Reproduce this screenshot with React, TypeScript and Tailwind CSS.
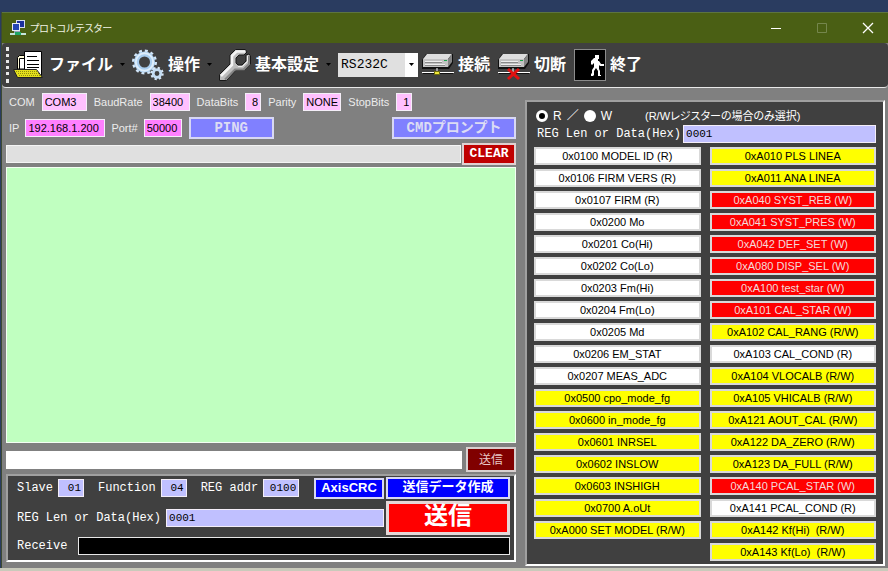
import type { ReactNode } from "react";
import clsx from "clsx";

type Tone = "read" | "both" | "write";

type Register = {
  label: string;
  tone: Tone;
};

const leftRegisters: Register[] = [
  { label: "0x0100 MODEL ID (R)", tone: "read" },
  { label: "0x0106 FIRM VERS (R)", tone: "read" },
  { label: "0x0107 FIRM (R)", tone: "read" },
  { label: "0x0200 Mo", tone: "read" },
  { label: "0x0201 Co(Hi)", tone: "read" },
  { label: "0x0202 Co(Lo)", tone: "read" },
  { label: "0x0203 Fm(Hi)", tone: "read" },
  { label: "0x0204 Fm(Lo)", tone: "read" },
  { label: "0x0205 Md", tone: "read" },
  { label: "0x0206 EM_STAT", tone: "read" },
  { label: "0x0207 MEAS_ADC", tone: "read" },
  { label: "0x0500 cpo_mode_fg", tone: "both" },
  { label: "0x0600 in_mode_fg", tone: "both" },
  { label: "0x0601 INRSEL", tone: "both" },
  { label: "0x0602 INSLOW", tone: "both" },
  { label: "0x0603 INSHIGH", tone: "both" },
  { label: "0x0700 A.oUt", tone: "both" },
  { label: "0xA000 SET MODEL (R/W)", tone: "both" },
];

const rightRegisters: Register[] = [
  { label: "0xA010 PLS LINEA", tone: "both" },
  { label: "0xA011 ANA LINEA", tone: "both" },
  { label: "0xA040 SYST_REB (W)", tone: "write" },
  { label: "0xA041 SYST_PRES (W)", tone: "write" },
  { label: "0xA042 DEF_SET (W)", tone: "write" },
  { label: "0xA080 DISP_SEL (W)", tone: "write" },
  { label: "0xA100 test_star (W)", tone: "write" },
  { label: "0xA101 CAL_STAR (W)", tone: "write" },
  { label: "0xA102 CAL_RANG (R/W)", tone: "both" },
  { label: "0xA103 CAL_COND (R)", tone: "read" },
  { label: "0xA104 VLOCALB (R/W)", tone: "both" },
  { label: "0xA105 VHICALB (R/W)", tone: "both" },
  { label: "0xA121 AOUT_CAL (R/W)", tone: "both" },
  { label: "0xA122 DA_ZERO (R/W)", tone: "both" },
  { label: "0xA123 DA_FULL (R/W)", tone: "both" },
  { label: "0xA140 PCAL_STAR (W)", tone: "write" },
  { label: "0xA141 PCAL_COND (R)", tone: "read" },
  { label: "0xA142 Kf(Hi)  (R/W)", tone: "both" },
  { label: "0xA143 Kf(Lo)  (R/W)", tone: "both" },
];

const toneClass: Record<Tone, string> = {
  read: "bg-white text-black",
  both: "bg-[#ffff00] text-black",
  write: "bg-[#ff0000] text-[#f4dada]",
};

const mono = "font-['Liberation_Mono','Noto_Sans_CJK_JP',monospace]";

function AppIcon() {
  return (
    <svg className="size-4 shrink-0" viewBox="0 0 16 16" aria-hidden="true">
      <path d="M6 0h9v8H6z" fill="#d5dcee" />
      <path d="M7 1h7v6H7z" fill="#1b2f9c" />
      <path d="M2 3h8v8H2z" fill="#e6ebf7" />
      <path d="M3 4h6v6H3z" fill="#2344b4" />
      <path d="M4 11h6v2H4z" fill="#9aa4bb" />
      <path d="M0 13h16v2H0z" fill="#c6e4dc" />
      <path d="M5 12h6v3H5z" fill="#1fa565" />
    </svg>
  );
}

function FolderIcon() {
  return (
    <svg className="h-8 w-8 shrink-0" viewBox="0 0 32 32" aria-hidden="true">
      <path d="M4.500 20V8.500l2-2h5V20z" fill="#fffbd8" stroke="#000" />
      <path d="M6.500 20V9.500h5V20z" fill="#fff" stroke="#000" />
      <path d="M11.500 2.500h17v24h-17z" fill="#fff" stroke="#000" />
      <path d="M14 7.500h10M14 11.500h12M14 15.500h12M14 18.500h12" stroke="#000" />
      <path d="M.5 20.500h23l6 8h-25z" fill="#e3e01c" stroke="#222" />
      <path d="M3 22.500h21M5 24.500h21M6 26.500h21" stroke="#8f8c10" strokeDasharray="1 1" />
    </svg>
  );
}

function GearsIcon() {
  return (
    <svg className="h-8 w-8 shrink-0" viewBox="0 0 32 32" fill="none" aria-hidden="true">
      <circle cx="12.500" cy="13" r="11" stroke="#d3e6f8" strokeWidth="3" strokeDasharray="2.880 2.880" />
      <circle cx="12.500" cy="13" r="8" stroke="#a9cdee" strokeWidth="5" />
      <circle cx="12.500" cy="13" r="8.700" stroke="#deedfa" strokeWidth="2" />
      <circle cx="25" cy="24.500" r="5.500" stroke="#d8e8f8" strokeWidth="2.400" strokeDasharray="2.160 2.160" />
      <circle cx="25" cy="24.500" r="3.800" stroke="#c4dcf2" strokeWidth="2.800" />
    </svg>
  );
}

function WrenchIcon() {
  return (
    <svg className="h-8 w-8 shrink-0" viewBox="0 0 32 32" aria-hidden="true">
      <path
        d="M.5 25.500L11 15V6L16.500.5h10L28 3l-3 3h-5l-3 3v5l2 2h4l4-4V6l3-1 1.500 2v8L25 21.500h-8.500L7.500 31.500h-7z"
        fill="#bdbdbd"
        stroke="#181818"
      />
      <path d="M2 27L13 16V7l4.500-4.500H26" fill="none" stroke="#f4f4f4" strokeWidth="2.500" />
      <path d="M6 30.500L16 20.500h8.500L30 15V7" fill="none" stroke="#858585" strokeWidth="2" />
      <path d="M19 17.500h4.500l5-5V7" fill="none" stroke="#eee" />
    </svg>
  );
}

function DriveIcon({ broken = false }: { broken?: boolean }) {
  return (
    <svg className="h-8 w-8 shrink-0" viewBox="0 0 32 32" aria-hidden="true">
      <path d="M0 11l4-6h27v9l-4 6H0z" fill="#111" />
      <path d="M1 10l4-5h25l-4 5z" fill="#dedede" />
      <path d="M1 10h25v8H1z" fill="#c2c2c2" />
      <path d="M26 10l4-5v8l-4 5z" fill="#858585" />
      <path d="M3 12.500h17M3 15.500h20" stroke="#eee" />
      <path d="M3 13.500h17M3 16.500h20" stroke="#8a8a8a" />
      <path d="M22 11h3v1h-3z" fill="#17a34a" />
      <path d="M15 19v5M0 23.500h13M18 23.500h14" stroke="#fff" />
      <path d="M1 24.500h12M18 24.500h13" stroke="#111" />
      {broken ? (
        <path d="M10 20l11 10M21 20l-11 10" stroke="#e01010" strokeWidth="3" />
      ) : (
        <path d="M12.500 22.500h5v3h-5z" fill="#f0e838" stroke="#6d6a10" />
      )}
    </svg>
  );
}

function ExitIcon() {
  return (
    <svg className="h-8 w-8 shrink-0 border border-[#8c8c8c] bg-black" viewBox="0 0 30 30" aria-hidden="true">
      <path
        d="M20 5h4v4h-1v2h1l2 3h3v2h-4l-1-1v4l1 2v4h1v1h-3v-5l-2-3-2 3v4l-1 1h-2v-2l1-1v-3l2-3v-4l-2 2-1-1v-3l3-3h2V9h-1z"
        fill="#fff"
      />
    </svg>
  );
}

function Caret() {
  return (
    <svg className="mx-[7px] h-1 w-[5px] shrink-0" viewBox="0 0 5 4" aria-hidden="true">
      <path d="M0 0h5L2.500 3z" fill="#000" />
    </svg>
  );
}

function ToolButton({ icon, children }: { icon: ReactNode; children: ReactNode }) {
  return (
    <button type="button" className="flex shrink-0 items-center gap-1 text-base font-bold whitespace-nowrap text-white">
      {icon}
      {children}
    </button>
  );
}

type FieldProps = {
  id: string;
  label: string;
  value: string;
  className: string;
  labelClass?: string;
};

function Field({ id, label, value, className, labelClass }: FieldProps) {
  return (
    <>
      <label htmlFor={id} className={clsx("shrink-0 whitespace-nowrap", labelClass)}>
        {label}
      </label>
      <input
        id={id}
        defaultValue={value}
        className={clsx("h-[18px] min-w-0 border border-[#f4eef8] px-[2px] text-black", className)}
      />
    </>
  );
}

function RegisterColumn({ items }: { items: Register[] }) {
  return (
    <div className="flex flex-col gap-1">
      {items.map((item) => (
        <button
          key={item.label}
          type="button"
          className={clsx(
            "flex h-[18px] items-center justify-center border-2 border-[#d9d9d9] text-[11px] leading-3 whitespace-pre",
            toneClass[item.tone],
          )}
        >
          {item.label}
        </button>
      ))}
    </div>
  );
}

function TitleBar() {
  return (
    <header className="flex h-[31px] items-center border-t border-[#5d7440] bg-[#4a5f14] pr-[14px] pl-2 text-[#f0f2e4]">
      <AppIcon />
      <h1 className="ml-1 text-[10px] [font-feature-settings:'palt']">プロトコルテスター</h1>
      <div className="ml-auto flex gap-[34px]">
        <button type="button" aria-label="最小化">
          <svg className="size-3" viewBox="0 0 12 12">
            <path d="M1 6.500h10" stroke="#fff" />
          </svg>
        </button>
        <button type="button" aria-label="最大化" disabled>
          <svg className="size-3" viewBox="0 0 12 12" fill="none">
            <path d="M1.500 1.500h9v9h-9z" stroke="#75864d" />
          </svg>
        </button>
        <button type="button" aria-label="閉じる">
          <svg className="size-3" viewBox="0 0 12 12">
            <path d="M1 1l10 10M11 1L1 11" stroke="#fff" strokeWidth="1.300" />
          </svg>
        </button>
      </div>
    </header>
  );
}

function Toolbar() {
  return (
    <nav className="flex h-[45px] items-center rounded-sm border-b border-[#e8e8e8] bg-[#404040] pl-1">
      <span className="mr-1 h-9 w-0 shrink-0 border-l-3 border-dotted border-[#e8e8e8]" />
      <ToolButton icon={<FolderIcon />}>ファイル</ToolButton>
      <Caret />
      <ToolButton icon={<GearsIcon />}>操作</ToolButton>
      <Caret />
      <ToolButton icon={<WrenchIcon />}>基本設定</ToolButton>
      <Caret />
      <div className="mr-1 grid w-20 shrink-0 items-center">
        <select
          aria-label="通信方式"
          className={clsx(
            "col-start-1 row-start-1 h-6 w-full appearance-none border-r-13 border-white bg-[#e0e0e0] pl-[3px] text-[13px] text-black",
            mono,
          )}
        >
          <option>RS232C</option>
        </select>
        <svg className="pointer-events-none col-start-1 row-start-1 mr-1 h-1 w-[5px] justify-self-end" viewBox="0 0 5 4">
          <path d="M0 0h5L2.500 3z" fill="#000" />
        </svg>
      </div>
      <div className="flex gap-2">
        <ToolButton icon={<DriveIcon />}>接続</ToolButton>
        <ToolButton icon={<DriveIcon broken />}>切断</ToolButton>
        <ToolButton icon={<ExitIcon />}>終了</ToolButton>
      </div>
    </nav>
  );
}

function ConnectionSettings() {
  return (
    <>
      <div className="flex items-center gap-[7px] pl-[3px]">
        <Field id="com" label="COM" value="COM3" className="w-[45px] bg-[#ffc0ff]" />
        <Field id="baud" label="BaudRate" value="38400" className="w-10 bg-[#ffc0ff]" />
        <Field id="data-bits" label="DataBits" value="8" className="w-4 bg-[#ffc0ff] text-right" />
        <Field id="parity" label="Parity" value="NONE" className="w-[38px] bg-[#ffc0ff]" />
        <Field id="stop-bits" label="StopBits" value="1" className="w-4 bg-[#ffc0ff] text-right" />
      </div>
      <div className="mt-[6px] flex items-center gap-[6px] pl-[3px]">
        <Field id="ip" label="IP" value="192.168.1.200" className="w-20 bg-[#ff80ff]" />
        <Field id="port" label="Port#" value="50000" className="w-[38px] bg-[#ff80ff]" />
        <button
          type="button"
          className={clsx("ml-px h-[22px] w-[85px] border-2 border-[#d8d8f4] bg-[#8080ff] text-sm leading-4 font-bold text-[#dcdcf4]", mono)}
        >
          PING
        </button>
        <button
          type="button"
          className={clsx("ml-auto h-[22px] w-[124px] border-2 border-[#d8d8f4] bg-[#8080ff] text-sm leading-4 font-bold text-[#dcdcf4]", mono)}
        >
          CMDプロンプト
        </button>
      </div>
    </>
  );
}

function MessagePanel() {
  return (
    <section
      className={clsx(
        "mt-[2px] flex flex-col gap-[2px] border-2 border-t-[#a0a0a0] border-r-white border-b-white border-l-[#a0a0a0] bg-[#404040] px-1 pt-px pb-[5px] text-xs text-white",
        mono,
      )}
    >
      <div className="grid grid-cols-[1fr_124px] gap-[2px]">
        <div className="flex items-center gap-[5px] pl-[5px]">
          <Field id="slave" label="Slave" value="01" className="w-[26px] bg-[#c0c0ff] text-right text-[11px]" />
          <Field id="function" label="Function" value="04" labelClass="ml-[9px]" className="w-[26px] bg-[#c0c0ff] text-right text-[11px]" />
          <Field id="reg-addr" label="REG addr" value="0100" labelClass="ml-[9px]" className="w-9 bg-[#c0c0ff] text-right text-[11px]" />
          <button
            type="button"
            className="ml-auto h-[21px] w-[70px] shrink-0 border-2 border-[#d8d8f4] bg-[#0000ff] font-['Liberation_Sans',sans-serif] text-[13px] leading-4 font-bold"
          >
            AxisCRC
          </button>
        </div>
        <button
          type="button"
          className="h-[22px] border-2 border-[#d8d8f4] bg-[#0000ff] text-[13px] leading-4 font-bold"
        >
          送信データ作成
        </button>
        <div className="flex items-center gap-[5px] pl-[5px]">
          <Field id="reg-data" label="REG Len or Data(Hex)" value="0001" className="flex-1 bg-[#c0c0ff] text-[11px]" />
        </div>
        <button type="button" className="h-[34px] border-3 border-[#e4d8d8] bg-[#ff0000] text-2xl leading-7 font-bold">
          送信
        </button>
      </div>
      <div className="flex items-center gap-[11px] pl-[5px]">
        <label htmlFor="receive">Receive</label>
        <input id="receive" readOnly className="h-[18px] min-w-0 flex-1 border border-[#e8e8e8] bg-black text-white" />
      </div>
    </section>
  );
}

function RegisterPanel() {
  return (
    <section className="flex flex-col border-2 border-t-[#a0a0a0] border-r-white border-b-white border-l-[#a0a0a0] bg-[#404040] px-[7px] pt-[6px] text-white">
      <div className="flex h-4 items-center gap-[5px] pl-[2px] text-xs whitespace-nowrap">
        <label className="flex items-center gap-[5px]">
          <input
            type="radio"
            name="access"
            defaultChecked
            className="size-3 appearance-none rounded-full bg-white checked:border-3 checked:border-white checked:bg-black"
          />
          R
        </label>
        <span>／</span>
        <label className="flex items-center gap-[5px]">
          <input
            type="radio"
            name="access"
            className="size-3 appearance-none rounded-full bg-white checked:border-3 checked:border-white checked:bg-black"
          />
          W
        </label>
        <span className="ml-7 text-[11px] [font-feature-settings:'palt']">(R/Wレジスターの場合のみ選択)</span>
      </div>
      <div className={clsx("mt-px flex items-center gap-[2px] pl-[3px] text-xs", mono)}>
        <Field id="write-data" label="REG Len or Data(Hex)" value="0001" className="flex-1 bg-[#c0c0ff] text-[11px]" />
      </div>
      <div className="mt-1 grid grid-cols-2 gap-[9px]">
        <RegisterColumn items={leftRegisters} />
        <RegisterColumn items={rightRegisters} />
      </div>
    </section>
  );
}

export default function App() {
  return (
    <div className="flex min-h-screen flex-col border-b-3 border-[#c9cabb] bg-[#2a3c60] pt-3 pl-px font-['Liberation_Sans','Noto_Sans_CJK_JP',sans-serif]">
      <div className="flex flex-1 flex-col border-l border-[#3c4a33] bg-[#808080]">
        <TitleBar />
        <Toolbar />
        <main className="grid flex-1 grid-cols-[510fr_360fr] gap-[9px] pr-[3px] pl-1">
          <div className="flex min-w-0 flex-col pt-[5px] pb-[6px] text-[11px] text-[#ececec]">
            <ConnectionSettings />
            <div className="mt-1 flex items-center gap-px">
              <input aria-label="送信ログ" readOnly className="h-[18px] min-w-0 flex-1 border border-[#f4f4f4] bg-[#e0e0e0]" />
              <button
                type="button"
                className={clsx("h-[22px] w-[54px] border-2 border-[#e0d0d0] bg-[#c00000] text-[13px] leading-4 font-bold text-white", mono)}
              >
                CLEAR
              </button>
            </div>
            <textarea
              aria-label="受信ログ"
              readOnly
              className="mt-[2px] min-h-40 flex-1 resize-none border border-[#f4fff4] bg-[#c0ffc0] text-black"
            />
            <div className="mt-1 flex items-center gap-1">
              <input aria-label="送信データ" className="h-[18px] min-w-0 flex-1 bg-white text-black" />
              <button
                type="button"
                className="h-[25px] w-[50px] border-2 border-[#d8d0d0] bg-[#800000] text-xs leading-4 text-[#e8c8c8]"
              >
                送信
              </button>
            </div>
            <MessagePanel />
          </div>
          <div className="flex min-w-0 flex-col pt-3 pb-[2px] *:flex-1">
            <RegisterPanel />
          </div>
        </main>
      </div>
    </div>
  );
}
